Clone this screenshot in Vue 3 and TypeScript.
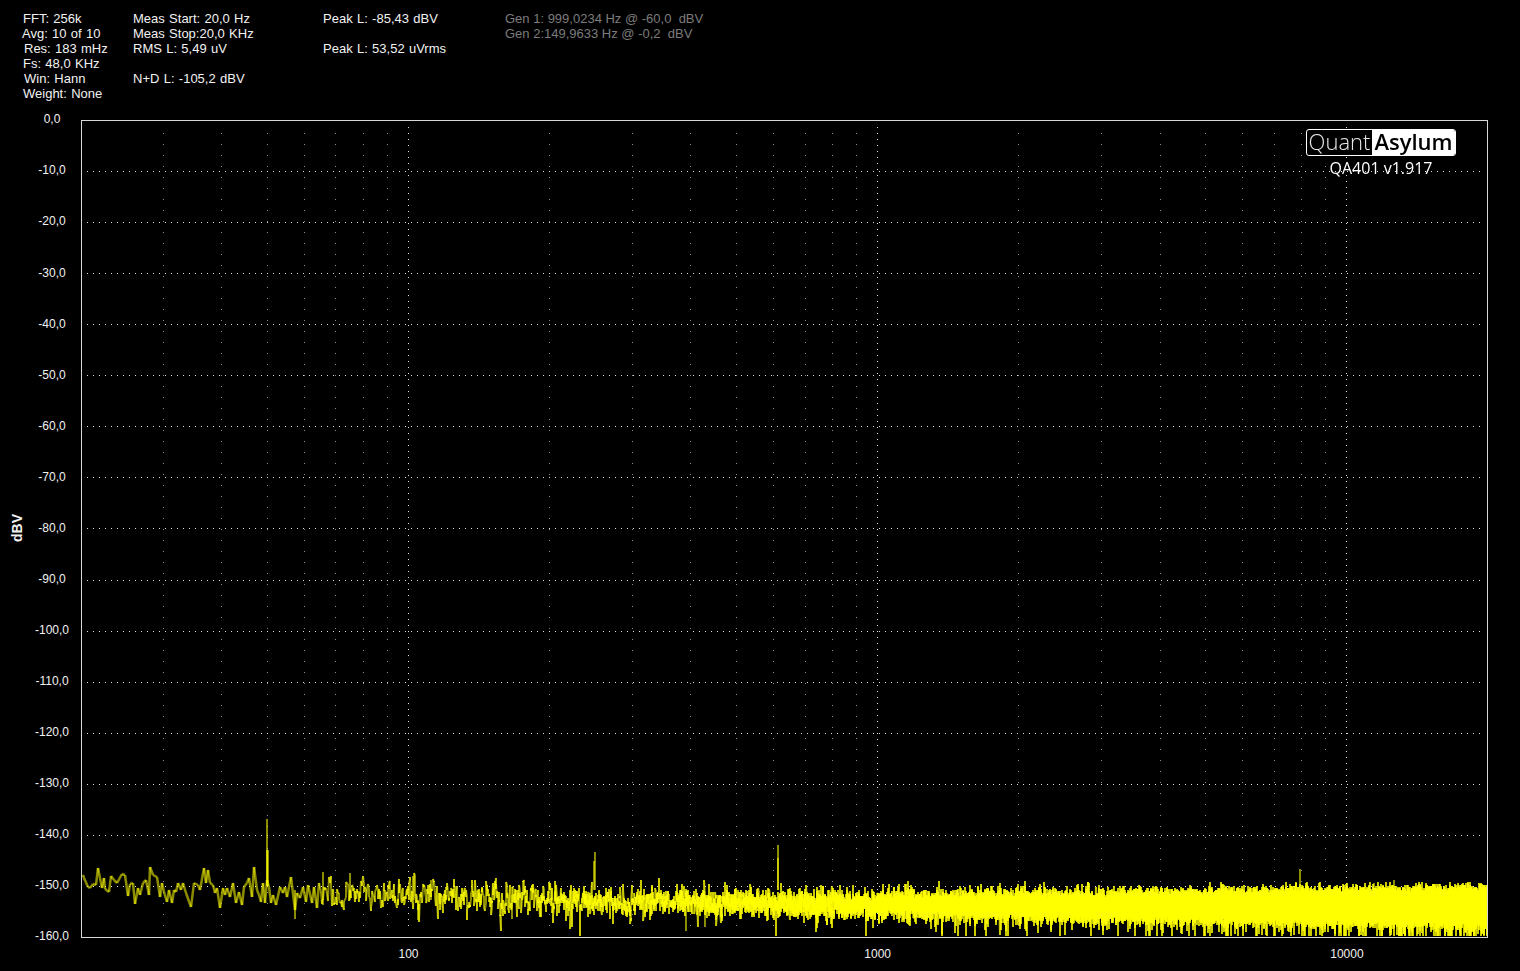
<script setup lang="ts">
import { onMounted, ref } from 'vue'

interface Line { t: string; n?: number }

const col1: Line[] = [
  { t: 'FFT: 256k', n: 1 },
  { t: 'Avg: 10 of 10', n: 0 },
  { t: 'Res: 183 mHz', n: 2 },
  { t: 'Fs: 48,0 KHz', n: 1 },
  { t: 'Win: Hann', n: 2 },
  { t: 'Weight: None', n: 1 },
]
const col2: Line[] = [
  { t: 'Meas Start: 20,0 Hz' },
  { t: 'Meas Stop:20,0 KHz' },
  { t: 'RMS L: 5,49 uV' },
  { t: '' },
  { t: 'N+D L: -105,2 dBV' },
]
const col3: Line[] = [{ t: 'Peak L: -85,43 dBV' }, { t: '' }, { t: 'Peak L: 53,52 uVrms' }]
const col4: Line[] = [
  { t: 'Gen 1: 999,0234 Hz @ -60,0  dBV' },
  { t: 'Gen 2:149,9633 Hz @ -0,2  dBV' },
]
const columns = [
  { key: 'a', width: 111, lines: col1, dim: false },
  { key: 'b', width: 190, lines: col2, dim: false },
  { key: 'c', width: 182, lines: col3, dim: false },
  { key: 'd', width: 240, lines: col4, dim: true },
]

const yLabels: string[] = Array.from({ length: 17 }, (_, i) => (i === 0 ? '0,0' : `-${i * 10},0`))

const freqX = (f: number): number => 408.5 + 469.2 * Math.log10(f / 100)

const xLabels = [100, 1000, 10000].map((f) => ({ f, left: freqX(f) - 81 }))

const gridY: number[] = Array.from({ length: 15 }, (_, i) => Math.round(120 + (i + 1) * 51.06) + 0.5)
const majorX: number[] = xLabels.map((l) => Math.floor(freqX(l.f)) + 0.5)
const minorX: number[] = []
for (const d of [10, 100, 1000]) {
  for (let m = 2; m <= 9; m++) {
    const f = d * m
    if (f >= 30) minorX.push(Math.floor(freqX(f)) + 0.5)
  }
}

const traceA = '5,45 10,55 20,80 28,85 35,73 45,75 52,25 57,55 62,85 68,55 72,88 83,97 90,48 100,60 108,70 122,42 133,45 140,108 148,72 155,70 163,132 170,85 178,105 185,70 195,60 203,105 208,22 215,45 228,52 238,110 243,70 250,95 258,125 265,90 272,128 278,90 285,95 290,70 300,90 305,70 315,100 330,140 338,70 350,75'
const traceB = '0,90 12,25 17,70 24,30 30,70 40,75 45,100 52,85 60,145 68,85 75,105 82,85 90,110 100,70 108,130 118,95 125,135 133,80 142,70 148,55 155,110 162,20 170,90 178,105 183,125 188,70 195,130 200,60 207,80 212,130 218,105 228,135 240,80 250,100 255,80 262,110 272,50 285,150 292,100 300,115 308,80 318,125 325,75 335,130 342,80 352,145 358,70'

const parseTrace = (s: string, base: number): [number, number][] =>
  s.split(' ').map((p) => {
    const [a, b] = p.split(',').map(Number)
    return [base + a / 3, 860 + b / 3] as [number, number]
  })

const canvasRef = ref<HTMLCanvasElement | null>(null)

function mulberry(seed: number): () => number {
  let a = seed
  return () => {
    a = (a + 0x6d2b79f5) | 0
    let t = Math.imul(a ^ (a >>> 15), 1 | a)
    t = (t + Math.imul(t ^ (t >>> 7), 61 | t)) ^ t
    return ((t ^ (t >>> 14)) >>> 0) / 4294967296
  }
}

onMounted(() => {
  const canvas = canvasRef.value
  if (!canvas) return
  const ctx = canvas.getContext('2d')
  if (!ctx) return
  ctx.translate(-82, -121)
  ctx.lineCap = 'butt'
  ctx.strokeStyle = 'rgba(255,255,0,0.55)'

  const seg = (x1: number, y1: number, x2: number, y2: number) => {
    ctx.beginPath()
    ctx.moveTo(Math.round(x1), Math.round(y1))
    ctx.lineTo(Math.round(x2), Math.round(y2))
    ctx.stroke()
  }

  const rand = mulberry(401)
  const gauss = () => Math.sqrt(-2 * Math.log(1 - rand())) * Math.cos(2 * Math.PI * rand())
  const pts: [number, number][] = [...parseTrace(traceA, 81), ...parseTrace(traceB, 200)]
  ctx.lineWidth = 2.5
  for (let i = 1; i < pts.length; i++) seg(pts[i - 1][0], pts[i - 1][1], pts[i][0], pts[i][1])

  const lerp = (x: number, a: number, b: number, va: number, vb: number) =>
    va + ((Math.min(b, Math.max(a, x)) - a) / (b - a)) * (vb - va)
  const centre = (x: number): number =>
    x < 500 ? lerp(x, 320, 500, 892, 899) : x < 800 ? lerp(x, 500, 800, 899, 904) : lerp(x, 800, 1100, 904, 906)
  const sigma = (x: number): number => lerp(x, 320, 700, 9, 7)

  ctx.lineWidth = 2
  let prev = pts[pts.length - 1]
  let ar = 0
  for (let f = 65; f < 20000; f += 0.25) {
    const x = freqX(f)
    if (x < 320) continue
    ar = 0.45 * ar + 0.89 * gauss()
    let y = centre(x) + ar * sigma(x)
    if (rand() < 0.02) y += -Math.log(1 - rand()) * 10
    y = Math.max(centre(x) - 24, Math.min(936, y))
    seg(prev[0], prev[1], x, y)
    prev = [x, y]
  }

  const spikes: [number, number, number][] = [
    [267, 819, 886], [267, 850, 886], [268, 850, 886], [595, 852, 890], [594, 861, 890],
    [778, 845, 890], [778, 858, 890], [1300, 869, 890], [1394, 880, 890], [1374, 883, 890],
    [323, 872, 905], [350, 873, 900], [413, 876, 900], [431, 880, 900],
    [295, 890, 919], [418, 900, 920], [512, 895, 919], [705, 905, 927], [686, 905, 931],
  ]
  for (const [x, a, b] of spikes) seg(x, a, x, b)
})
</script>

<template>
  <div class="page">
    <header class="readouts">
      <div
        v-for="c in columns"
        :key="c.key"
        class="readout-col"
        :class="{ dim: c.dim }"
        :style="{ width: c.width + 'px' }"
      >
        <div
          v-for="(l, i) in c.lines"
          :key="i"
          class="readout-line"
          :style="{ paddingLeft: (l.n ?? 0) + 'px' }"
        >{{ l.t }}</div>
      </div>
    </header>

    <main class="chart">
      <div class="y-title"><span>dBV</span></div>
      <div class="y-labels">
        <span v-for="l in yLabels" :key="l">{{ l }}</span>
      </div>
      <div class="plot-col">
        <div class="plot">
          <svg class="layer" viewBox="82 121 1405 816" width="1405" height="816">
            <line
              v-for="x in minorX"
              :key="'m' + x"
              class="minor"
              :x1="x"
              :x2="x"
              y1="133"
              y2="926"
            />
            <line
              v-for="y in gridY"
              :key="'h' + y"
              class="major"
              x1="87"
              x2="1482"
              :y1="y"
              :y2="y"
            />
            <line
              v-for="x in majorX"
              :key="'v' + x"
              class="major"
              :x1="x"
              :x2="x"
              y1="127"
              y2="931"
            />
          </svg>
          <canvas ref="canvasRef" class="layer" width="1405" height="816"></canvas>
          <div class="brand">
            <div class="logo"><span class="quant">Quant</span><span class="asylum">Asylum</span></div>
            <div class="version">QA401 v1.917</div>
          </div>
        </div>
        <div class="x-labels">
          <span v-for="l in xLabels" :key="l.f" :style="{ left: l.left + 'px' }">{{ l.f }}</span>
        </div>
      </div>
    </main>
  </div>
</template>

<style>
html,
body {
  margin: 0;
  background: #000;
  overflow: hidden;
}
</style>

<style scoped>
.page {
  width: 1520px;
  height: 971px;
  background: #000;
  color: #f2f2f2;
  font-family: 'Liberation Sans', Arial, sans-serif;
  font-size: 12px;
  overflow: hidden;
}
.readouts {
  height: 112px;
  box-sizing: border-box;
  padding: 11px 0 0 22px;
  display: flex;
  align-items: flex-start;
  font-size: 13px;
  word-spacing: 0.7px;
}
.readout-col {
  flex: none;
}
.readout-line {
  height: 15px;
  line-height: 15px;
  white-space: pre;
}
.dim {
  color: #7c7c7c;
  word-spacing: 0;
}
.chart {
  display: flex;
  align-items: flex-start;
}
.y-title {
  width: 34px;
  height: 832px;
  display: flex;
  align-items: center;
  justify-content: center;
  font-weight: 700;
  font-size: 14px;
}
.y-title span {
  writing-mode: vertical-rl;
  transform: rotate(180deg);
}
.y-labels {
  width: 36px;
  margin-right: 11px;
  display: flex;
  flex-direction: column;
  gap: 36px;
  align-items: center;
  line-height: 15px;
}
.y-labels span:nth-child(3) {
  margin-bottom: 1px;
}
.plot-col {
  margin-top: 8px;
  width: 1407px;
}
.plot {
  position: relative;
  box-sizing: border-box;
  width: 1407px;
  height: 818px;
  border: 1px solid #d8d8d8;
}
.layer {
  position: absolute;
  left: 0;
  top: 0;
  display: block;
}
.minor {
  stroke: #8c8c8c;
  stroke-width: 1;
  stroke-dasharray: 1 10;
  shape-rendering: crispEdges;
}
.major {
  stroke: #e0e0e0;
  stroke-width: 1;
  stroke-dasharray: 1 5;
  shape-rendering: crispEdges;
}
.brand {
  position: absolute;
  top: 8px;
  right: 31px;
  width: 150px;
  display: flex;
  flex-direction: column;
  align-items: center;
}
.logo {
  box-sizing: border-box;
  width: 150px;
  height: 27px;
  display: flex;
  border: 1px solid #fff;
  border-radius: 3px;
  background: #000;
  overflow: hidden;
  font-family: 'Open Sans', sans-serif;
  font-size: 22px;
  line-height: 23px;
}
.quant {
  width: 65px;
  text-align: center;
  font-weight: 300;
  color: #e8e8e8;
}
.asylum {
  flex: 1;
  text-align: center;
  font-weight: 600;
  color: #000;
  background: #fff;
}
.version {
  margin-top: 2px;
  font-family: 'Open Sans', sans-serif;
  font-size: 16px;
  line-height: 20px;
  color: #fff;
}
.x-labels {
  position: relative;
  height: 33px;
}
.x-labels span {
  position: absolute;
  top: 9px;
  line-height: 15px;
  transform: translateX(-50%);
}
</style>
